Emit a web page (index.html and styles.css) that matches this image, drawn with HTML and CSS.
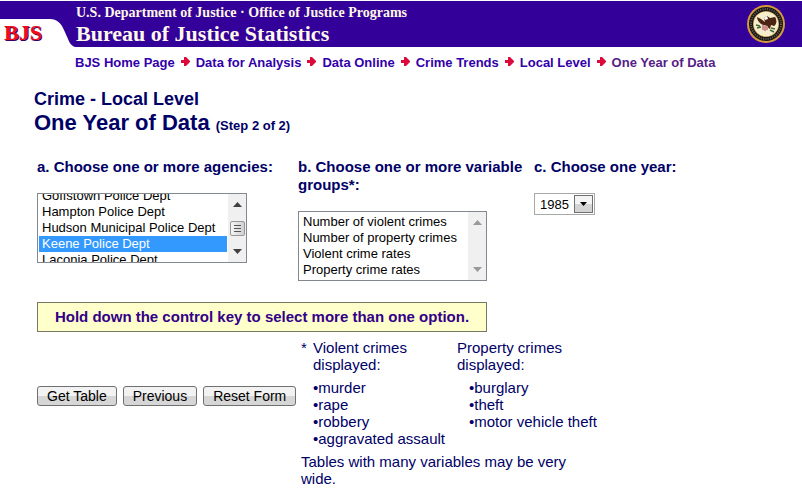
FILE: index.html
```html
<!DOCTYPE html>
<html lang="en">

<head>
    <meta charset="UTF-8" />
    <meta name="viewport" content="width=device-width, initial-scale=1.0" />
    <title>Bureau of Justice Statistics - One Year of Data</title>

    <link rel="stylesheet" href="styles.css">
</head>

<body>
    <!-- BANNER -->
    <header class="banner">
        <div class="logo">
            <svg class="tab" viewBox="0 0 75 28" aria-hidden="true">
                <path d="M0 0H50C57 0 61 4 64 11L68 20C70 25 72 27 75 28H0Z" fill="#fff" />
            </svg>
            <a class="bjs" href="#">BJS</a>
        </div>

        <div class="names">
            <div class="department">U.S. Department of Justice · Office of Justice Programs</div>
            <div class="bureau">Bureau of Justice Statistics</div>
        </div>

        <svg class="seal" viewBox="0 0 38 38" role="img" aria-label="Department of Justice seal">
            <circle cx="19" cy="19" r="19" fill="#d69a3c" />
            <circle cx="19" cy="19" r="17" fill="#15151c" />
            <circle cx="19" cy="19" r="15" fill="none" stroke="#6f6344" stroke-width="2" stroke-dasharray="1 1.300" />
            <circle cx="19" cy="19" r="13" fill="#c9a050" />
            <circle cx="19" cy="19" r="12.300" fill="#f6edcb" />
            <path d="M10 12L14 14L18 17L17 13L20 11L23 13L28 12C30 15 30 19 27 21L24 20L23 24L19 21L14 19C12 17 10 15 10 12Z" fill="#4c2413" />
            <path d="M17 13L20 11L21 14L18 15Z" fill="#fff" />
            <path d="M15 20L21 21L21 25L18 27L14 24Z" fill="#e9e5e2" />
            <path d="M16 20V25M18 21V26M20 21V25" stroke="#b43b32" stroke-width="1" />
            <path d="M9 20L13 21M10 23L14 22M24 23L28 24M23 25L27 27" stroke="#41663b" stroke-width="1.400" fill="none" />
        </svg>
    </header>

    <svg class="symbols" aria-hidden="true">
        <symbol id="arrow" viewBox="0 0 9 9">
            <path d="M0 3H3V0H5L9 4V5L5 9H3V6H0Z" fill="#dc0a3c" />
        </symbol>
    </svg>

    <nav class="crumbs">
        <a href="#">BJS Home Page</a>
        <svg class="arrow"><use href="#arrow" /></svg>
        <a href="#">Data for Analysis</a>
        <svg class="arrow"><use href="#arrow" /></svg>
        <a href="#">Data Online</a>
        <svg class="arrow"><use href="#arrow" /></svg>
        <a href="#">Crime Trends</a>
        <svg class="arrow"><use href="#arrow" /></svg>
        <a href="#">Local Level</a>
        <svg class="arrow"><use href="#arrow" /></svg>
        <a class="visited" href="#">One Year of Data</a>
    </nav>

    <main>
        <h1>
            <span class="section">Crime - Local Level</span>
            One Year of Data <small>(Step 2 of 2)</small>
        </h1>

        <form action="">
            <div class="choices">
                <!-- AGENCIES -->
                <div class="choice">
                    <label for="agencies">a. Choose one or more agencies:</label>
                    <div class="listbox">
                        <select id="agencies" name="agencies" multiple size="4">
                            <option>Franklin Police Dept</option>
                            <option>Goffstown Police Dept</option>
                            <option>Hampton Police Dept</option>
                            <option>Hudson Municipal Police Dept</option>
                            <option selected>Keene Police Dept</option>
                            <option>Laconia Police Dept</option>
                            <option>Lebanon Police Dept</option>
                        </select>
                        <span class="scroll" aria-hidden="true">
                            <svg class="tip" viewBox="0 0 9 5"><path d="M0 5L4.500 0L9 5Z" /></svg>
                            <span class="thumb"></span>
                            <svg class="tip" viewBox="0 0 9 5"><path d="M0 0L4.500 5L9 0Z" /></svg>
                        </span>
                    </div>
                </div>

                <!-- VARIABLES -->
                <div class="choice">
                    <label for="variables">b. Choose one or more variable groups*:</label>
                    <div class="listbox">
                        <select id="variables" name="variables" multiple size="4">
                            <option>Number of violent crimes</option>
                            <option>Number of property crimes</option>
                            <option>Violent crime rates</option>
                            <option>Property crime rates</option>
                        </select>
                        <span class="scroll idle" aria-hidden="true">
                            <svg class="tip" viewBox="0 0 9 5"><path d="M0 5L4.500 0L9 5Z" /></svg>
                            <svg class="tip" viewBox="0 0 9 5"><path d="M0 0L4.500 5L9 0Z" /></svg>
                        </span>
                    </div>
                </div>

                <!-- YEAR -->
                <div class="choice">
                    <label for="year">c. Choose one year:</label>
                    <div class="dropdown">
                        <select id="year" name="year">
                            <option>1985</option>
                        </select>
                        <span class="drop" aria-hidden="true">
                            <svg viewBox="0 0 7 4"><path d="M0 0H7L3.500 4Z" /></svg>
                        </span>
                    </div>
                </div>
            </div>

            <p class="hint">Hold down the control key to select more than one option.</p>

            <div class="bottom">
                <div class="buttons">
                    <button type="submit">Get Table</button>
                    <button type="button">Previous</button>
                    <button type="reset">Reset Form</button>
                </div>

                <div class="notes">
                    <div class="crimes">
                        <span>*</span>
                        <div>
                            <p>Violent crimes displayed:</p>
                            <ul>
                                <li>murder</li>
                                <li>rape</li>
                                <li>robbery</li>
                                <li>aggravated assault</li>
                            </ul>
                        </div>
                        <div>
                            <p>Property crimes displayed:</p>
                            <ul class="indent">
                                <li>burglary</li>
                                <li>theft</li>
                                <li>motor vehicle theft</li>
                            </ul>
                        </div>
                    </div>
                    <p class="wide">Tables with many variables may be very wide.</p>
                </div>
            </div>
        </form>
    </main>

    <script>
        // scroll the agency list down to the selected one
        document.querySelector("#agencies").scrollTop = 24;
    </script>
</body>

</html>
```

FILE: styles.css
```css
body {
    margin: 0;
    padding-top: 1px;
    background: #fff;
    color: #000066;
    font-family: Arial, "Liberation Sans", sans-serif;
    font-size: 15px;
    line-height: 17px;
}

p,
ul,
h1 {
    margin: 0;
    padding: 0;
}

a {
    text-decoration: none;
}

.banner {
    display: flex;
    align-items: flex-end;
    height: 46px;
    background: #330099;
    color: #fff8e8;
    font-family: "Times New Roman", "Liberation Serif", serif;
    font-weight: bold;
}

.logo {
    display: grid;
    width: 76px;
}

.tab {
    grid-area: 1 / 1;
    width: 75px;
    height: 28px;
}

.bjs {
    grid-area: 1 / 1;
    padding-left: 4px;
    font-size: 22px;
    line-height: 28px;
    color: #f00c18;
    text-shadow: 1px 1px 0 #330066;
}

.names {
    flex: 1;
}

.department {
    font-size: 14px;
    line-height: 16px;
}

.bureau {
    font-size: 22px;
    line-height: 26px;
}

.seal {
    align-self: center;
    width: 38px;
    height: 38px;
    margin-right: 17px;
}

.symbols {
    display: none;
}

.crumbs {
    display: flex;
    align-items: center;
    gap: 5px;
    padding: 7px 0 0 75px;
    font-size: 13px;
    font-weight: bold;
}

.crumbs a {
    color: #3300aa;
}

.crumbs .visited {
    color: #552288;
}

.arrow {
    width: 9px;
    height: 9px;
    margin: 0 1px 3px;
}

main {
    padding: 16px 34px 0;
}

h1 {
    font-size: 22px;
    line-height: 24px;
}

.section {
    display: block;
    font-size: 18px;
}

h1 small {
    font-size: 13px;
}

form {
    padding: 20px 4px 0 3px;
}

.choices {
    display: grid;
    grid-template-columns: 261px 236px 1fr;
    min-height: 144px;
}

.choice label {
    display: block;
    padding-bottom: 17px;
    font-weight: bold;
    line-height: 18px;
}

.listbox {
    display: inline-flex;
    border: 1px solid #828790;
    background: #fff;
}

select {
    border: 0;
    border-radius: 0;
    outline: 0;
    background: transparent;
    color: #000;
    font-family: Arial, "Liberation Sans", sans-serif;
    font-size: 13px;
    appearance: none;
}

.listbox select {
    width: 190px;
    height: 68px;
    padding: 2px 1px;
    scrollbar-width: none;
}

.listbox #variables {
    width: 169px;
}

option {
    min-height: 16px;
    padding: 0 3px;
    line-height: 16px;
}

#agencies option:checked {
    background: linear-gradient(#3399ff, #3399ff);
    -webkit-text-fill-color: #fff;
}

.scroll {
    display: flex;
    flex-direction: column;
    align-items: center;
    justify-content: space-between;
    box-sizing: border-box;
    width: 18px;
    padding: 8px 0;
    background: #f0f0f0;
}

.tip {
    width: 9px;
    height: 5px;
    fill: #404040;
}

.idle .tip {
    fill: #999;
}

.thumb {
    box-sizing: border-box;
    width: 15px;
    height: 15px;
    border: 1px solid #979797;
    border-radius: 2px;
    background: repeating-linear-gradient(#555 0 1px, transparent 1px 3px) center / 7px 7px no-repeat, linear-gradient(90deg, #f5f5f5, #d0d0d0);
}

.dropdown {
    display: inline-grid;
    align-items: center;
    border: 1px solid #a8a8a8;
}

.dropdown select {
    grid-area: 1 / 1;
    width: 59px;
    height: 20px;
    padding-left: 5px;
}

.drop {
    grid-area: 1 / 1;
    justify-self: end;
    display: flex;
    align-items: center;
    justify-content: center;
    width: 17px;
    height: 16px;
    margin-right: 1px;
    border: 1px solid #707070;
    background: linear-gradient(#f4f4f4 50%, #d4d4d4 50%);
    pointer-events: none;
}

.drop svg {
    width: 7px;
    height: 4px;
}

.hint {
    width: 448px;
    border: 1px solid #777766;
    background: #ffffcc;
    color: #330088;
    font-weight: bold;
    line-height: 28px;
    text-align: center;
}

.bottom {
    display: grid;
    grid-template-columns: 264px 1fr;
    padding-top: 7px;
}

.buttons {
    display: flex;
    align-items: flex-start;
    gap: 6px;
    padding-top: 47px;
}

button {
    height: 20px;
    padding: 0 9px;
    border: 1px solid #707070;
    border-radius: 3px;
    background: linear-gradient(#f2f2f2 50%, #d6d6d6 50%);
    color: #000;
    font-family: Arial, "Liberation Sans", sans-serif;
    font-size: 14px;
    line-height: 18px;
    white-space: nowrap;
}

.crimes {
    display: grid;
    grid-template-columns: 12px 144px 150px;
}

.crimes p {
    width: 110px;
    padding-bottom: 6px;
}

ul {
    list-style: none;
    white-space: nowrap;
}

li::before {
    content: "•";
}

.indent {
    padding-left: 12px;
}

.wide {
    width: 280px;
    padding-top: 6px;
}
```
